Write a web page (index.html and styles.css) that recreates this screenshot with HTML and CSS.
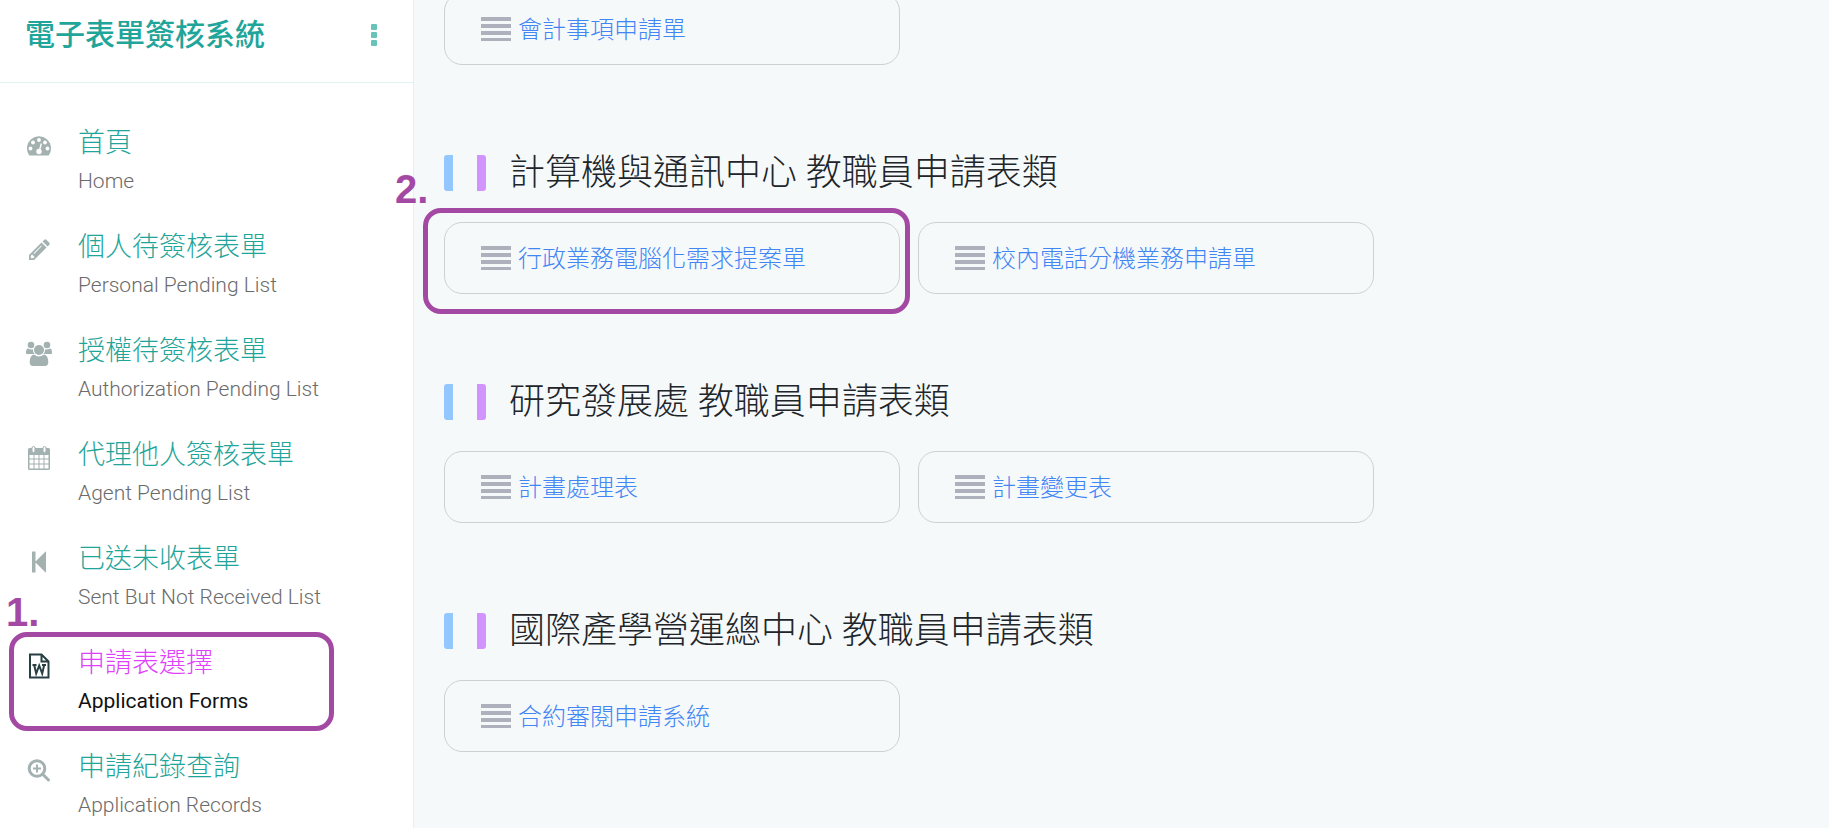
FILE: index.html
```
<!DOCTYPE html>
<html lang="zh-Hant">
<head>
    <meta charset="utf-8">
    <title>電子表單簽核系統</title>
    <link rel="stylesheet" href="styles.css">
</head>
<body>
  <div class="layout">
    <aside class="sidebar">
      <header class="brand">
        <h1>電子表單簽核系統</h1>
        <button type="button" class="more" aria-label="選單">
          <svg width="6" height="22" viewBox="0 0 6 22"><rect width="6" height="6" rx="1"/><rect y="8" width="6" height="6" rx="1"/><rect y="16" width="6" height="6" rx="1"/></svg>
        </button>
      </header>

      <nav class="menu">
        <a href="#">
          <!-- dashboard -->
          <svg class="icon" viewBox="0 0 26 26">
            <path d="M3 22A12 12 0 1 1 23 22Q22.600 22.500 22 22.500H4Q3.400 22.500 3 22Z"/>
            <g class="hole"><circle cx="4.500" cy="15.500" r="1.900"/><circle cx="7" cy="9.500" r="1.900"/><circle cx="13" cy="7" r="1.900"/><circle cx="19" cy="9.500" r="1.900"/><circle cx="21.500" cy="15.500" r="1.900"/><circle cx="13" cy="18.500" r="2.700"/><path d="M14.700 10.300L16 10.700L14 18.500L12.500 18Z"/></g>
          </svg>
          <span class="label"><span class="zh">首頁</span><span class="en">Home</span></span>
        </a>
        <a href="#">
          <!-- pencil -->
          <svg class="icon" viewBox="0 0 26 26">
            <path fill-rule="evenodd" d="M3 18L15.500 5.500L20.500 10.500L8 23H3ZM4.800 18.700V21.200H7.300L8.600 19.900L6.100 17.400ZM7.500 16.300L15.300 8.500L15.900 9.100L8.100 16.900ZM16.600 4.400L18.300 2.700Q19.300 1.900 20.300 2.700L23.300 5.700Q24.100 6.700 23.300 7.700L21.600 9.400Z"/>
          </svg>
          <span class="label"><span class="zh">個人待簽核表單</span><span class="en">Personal Pending List</span></span>
        </a>
        <a href="#">
          <!-- users -->
          <svg class="icon" viewBox="0 0 26 26">
            <circle cx="5" cy="4" r="3.300"/><circle cx="21" cy="4" r="3.300"/><circle cx="13" cy="9" r="5"/>
            <path d="M0 12Q0 7.500 2 7.500Q5 9.200 7 8.200Q6.800 11.500 8.500 13H2Q0 13.500 0 12ZM26 12Q26 7.500 24 7.500Q21 9.200 19 8.200Q19.200 11.500 17.500 13H24Q26 13.500 26 12ZM8 13.500Q13 17.500 18 13.500Q22 14 22.300 21Q22.300 25 19 25H7Q3.700 25 3.700 21Q4 14 8 13.500Z"/>
          </svg>
          <span class="label"><span class="zh">授權待簽核表單</span><span class="en">Authorization Pending List</span></span>
        </a>
        <a href="#">
          <!-- calendar -->
          <svg class="icon" viewBox="0 0 26 26">
            <path fill-rule="evenodd" d="M3.500 3H22.500Q24 3 24 4.500V23.500Q24 25 22.500 25H3.500Q2 25 2 23.500V4.500Q2 3 3.500 3ZM3.500 10V13.500H7.500V10ZM8.500 10V13.500H12.500V10ZM13.500 10V13.500H17.500V10ZM18.500 10V13.500H22.500V10ZM3.500 14.500V18.500H7.500V14.500ZM8.500 14.500V18.500H12.500V14.500ZM13.500 14.500V18.500H17.500V14.500ZM18.500 14.500V18.500H22.500V14.500ZM3.500 19.500V23.500H7.500V19.500ZM8.500 19.500V23.500H12.500V19.500ZM13.500 19.500V23.500H17.500V19.500ZM18.500 19.500V23.500H22.500V19.500Z"/>
            <rect class="ring" x="6" y="1.500" width="3" height="6" rx="1.500"/><rect class="ring" x="17" y="1.500" width="3" height="6" rx="1.500"/>
          </svg>
          <span class="label"><span class="zh">代理他人簽核表單</span><span class="en">Agent Pending List</span></span>
        </a>
        <a href="#">
          <!-- step backward -->
          <svg class="icon" viewBox="0 0 26 26">
            <path d="M6 3Q6 2.500 6.500 2.500H9Q9.500 2.500 9.500 3V12.600L19.300 2.800Q20 2.300 20 3.200V22.800Q20 23.700 19.300 23.200L9.500 13.400V23Q9.500 23.500 9 23.500H6.500Q6 23.500 6 23Z"/>
          </svg>
          <span class="label"><span class="zh">已送未收表單</span><span class="en">Sent But Not Received List</span></span>
        </a>
        <a href="#" class="active">
          <!-- word file -->
          <svg class="icon" viewBox="0 0 26 26">
            <path class="line" d="M4 1.500H15.500L22.500 8.500V24.500H4ZM15.500 1.500V8.500H22.500"/>
            <path class="line" d="M6.500 12H10.500M16 12H20M8.200 12L10.200 20.500L13.200 12.500L16.200 20.500L18.200 12"/>
          </svg>
          <span class="label"><span class="zh">申請表選擇</span><span class="en">Application Forms</span></span>
          <span class="mark mark-menu"></span>
          <span class="step step-menu">1.</span>
        </a>
        <a href="#">
          <!-- search plus -->
          <svg class="icon" viewBox="0 0 26 26">
            <g class="lens"><circle cx="11" cy="11.500" r="7.800"/><path d="M17 17.500L22.500 23"/></g>
            <path class="plus" d="M11 7.500V15.500M7 11.500H15"/>
          </svg>
          <span class="label"><span class="zh">申請紀錄查詢</span><span class="en">Application Records</span></span>
        </a>
      </nav>
    </aside>

    <main class="content">
      <section>
        <div class="cards">
          <a href="#" class="card"><i class="bars"></i>會計事項申請單</a>
        </div>
      </section>
      <section>
        <h2>計算機與通訊中心 教職員申請表類</h2>
        <div class="cards">
          <a href="#" class="card"><i class="bars"></i>行政業務電腦化需求提案單
            <span class="mark mark-card"></span>
            <span class="step step-card">2.</span>
          </a>
          <a href="#" class="card"><i class="bars"></i>校內電話分機業務申請單</a>
        </div>
      </section>
      <section>
        <h2>研究發展處 教職員申請表類</h2>
        <div class="cards">
          <a href="#" class="card"><i class="bars"></i>計畫處理表</a>
          <a href="#" class="card"><i class="bars"></i>計畫變更表</a>
        </div>
      </section>
      <section>
        <h2>國際產學營運總中心 教職員申請表類</h2>
        <div class="cards">
          <a href="#" class="card"><i class="bars"></i>合約審閱申請系統</a>
        </div>
      </section>
    </main>
  </div>
</body>
</html>
```
FILE: styles.css
```
* {
  box-sizing: border-box;
}
body {
  margin: 0;
  font-family: Roboto, "Noto Sans CJK TC", sans-serif;
  font-weight: 300;
  background-color: #f5f9fa;
}
a {
  text-decoration: none;
}

.layout {
  display: flex;
  height: 100vh;
  overflow: hidden;
}

/* sidebar */
.sidebar {
  flex: 0 0 414px;
  background-color: #fff;
  border-right: 1px solid #dff3f1;
}
.brand {
  display: flex;
  justify-content: space-between;
  align-items: center;
  height: 83px;
  padding: 0 36px 12px 25px;
  border-bottom: 1px solid #dff3f1;
}
.brand h1 {
  margin: 0;
  font-size: 30px;
  line-height: 40px;
  font-weight: 500;
  color: #1fa59a;
}
.more {
  display: flex;
  padding: 0;
  border: none;
  background: none;
  fill: #66c4bb;
  cursor: pointer;
}
.menu {
  padding-top: 33px;
}
.menu a {
  position: relative;
  display: flex;
  gap: 26px;
  height: 104px;
  padding: 8px 26px;
}
.icon {
  flex: none;
  width: 26px;
  height: 26px;
  margin-top: 9px;
  fill: #a3b1b0;
}
.hole {
  fill: #fff;
}
.ring {
  fill: #fff;
  stroke: #a3b1b0;
}
.line {
  fill: none;
  stroke: #263f42;
  stroke-width: 2;
}
.lens {
  fill: none;
  stroke: #a3b1b0;
  stroke-width: 3;
  stroke-linecap: round;
}
.plus {
  stroke: #a3b1b0;
  stroke-width: 2;
}
.label {
  display: flex;
  flex-direction: column;
}
.zh {
  font-size: 27px;
  line-height: 38px;
  color: #1fa59a;
}
.en {
  font-size: 21px;
  line-height: 38px;
  color: #6b6b6b;
}
.active .zh {
  color: #e040fb;
}
.active .en {
  font-weight: 400;
  color: #111;
}

/* form list, scrolled under the top edge */
.content {
  flex: 1;
  min-width: 0;
  padding: 0 30px;
  margin-top: -7px;
}
.content section {
  max-width: 930px;
  margin-bottom: 90px;
}
.content h2 {
  display: flex;
  align-items: center;
  height: 36px;
  margin: 0 0 31px;
  font-size: 36px;
  line-height: 36px;
  font-weight: 300;
  color: #212529;
}
.content h2::before {
  content: "";
  width: 24px;
  height: 36px;
  margin-right: 23px;
  border-left: 9px solid #94c7ff;
  border-right: 9px solid #d194ff;
  border-radius: 3px;
}
.cards {
  display: grid;
  grid-template-columns: 1fr 1fr;
  gap: 18px;
}
.card {
  position: relative;
  display: flex;
  align-items: center;
  height: 72px;
  padding: 0 36px 4px;
  border: 1px solid #cfd0d2;
  border-radius: 18px;
  font-size: 24px;
  color: #4285f4;
}
.bars {
  width: 30px;
  height: 24px;
  margin: 4px 7px 0 0;
  background: repeating-linear-gradient(#adb1bb 0 4px, transparent 4px 7px);
}

/* numbered steps */
.mark {
  position: absolute;
  border: 5px solid #a349a4;
  border-radius: 18px;
}
.mark-menu {
  left: 9px;
  top: -4px;
  width: 325px;
  height: 99px;
}
.mark-card {
  inset: -15px -11px -21px -22px;
}
.step {
  position: absolute;
  font: bold 40px "Liberation Sans", sans-serif;
  color: #a349a4;
}
.step-menu {
  left: 6px;
  top: -46px;
}
.step-card {
  left: -50px;
  top: -56px;
}
```
